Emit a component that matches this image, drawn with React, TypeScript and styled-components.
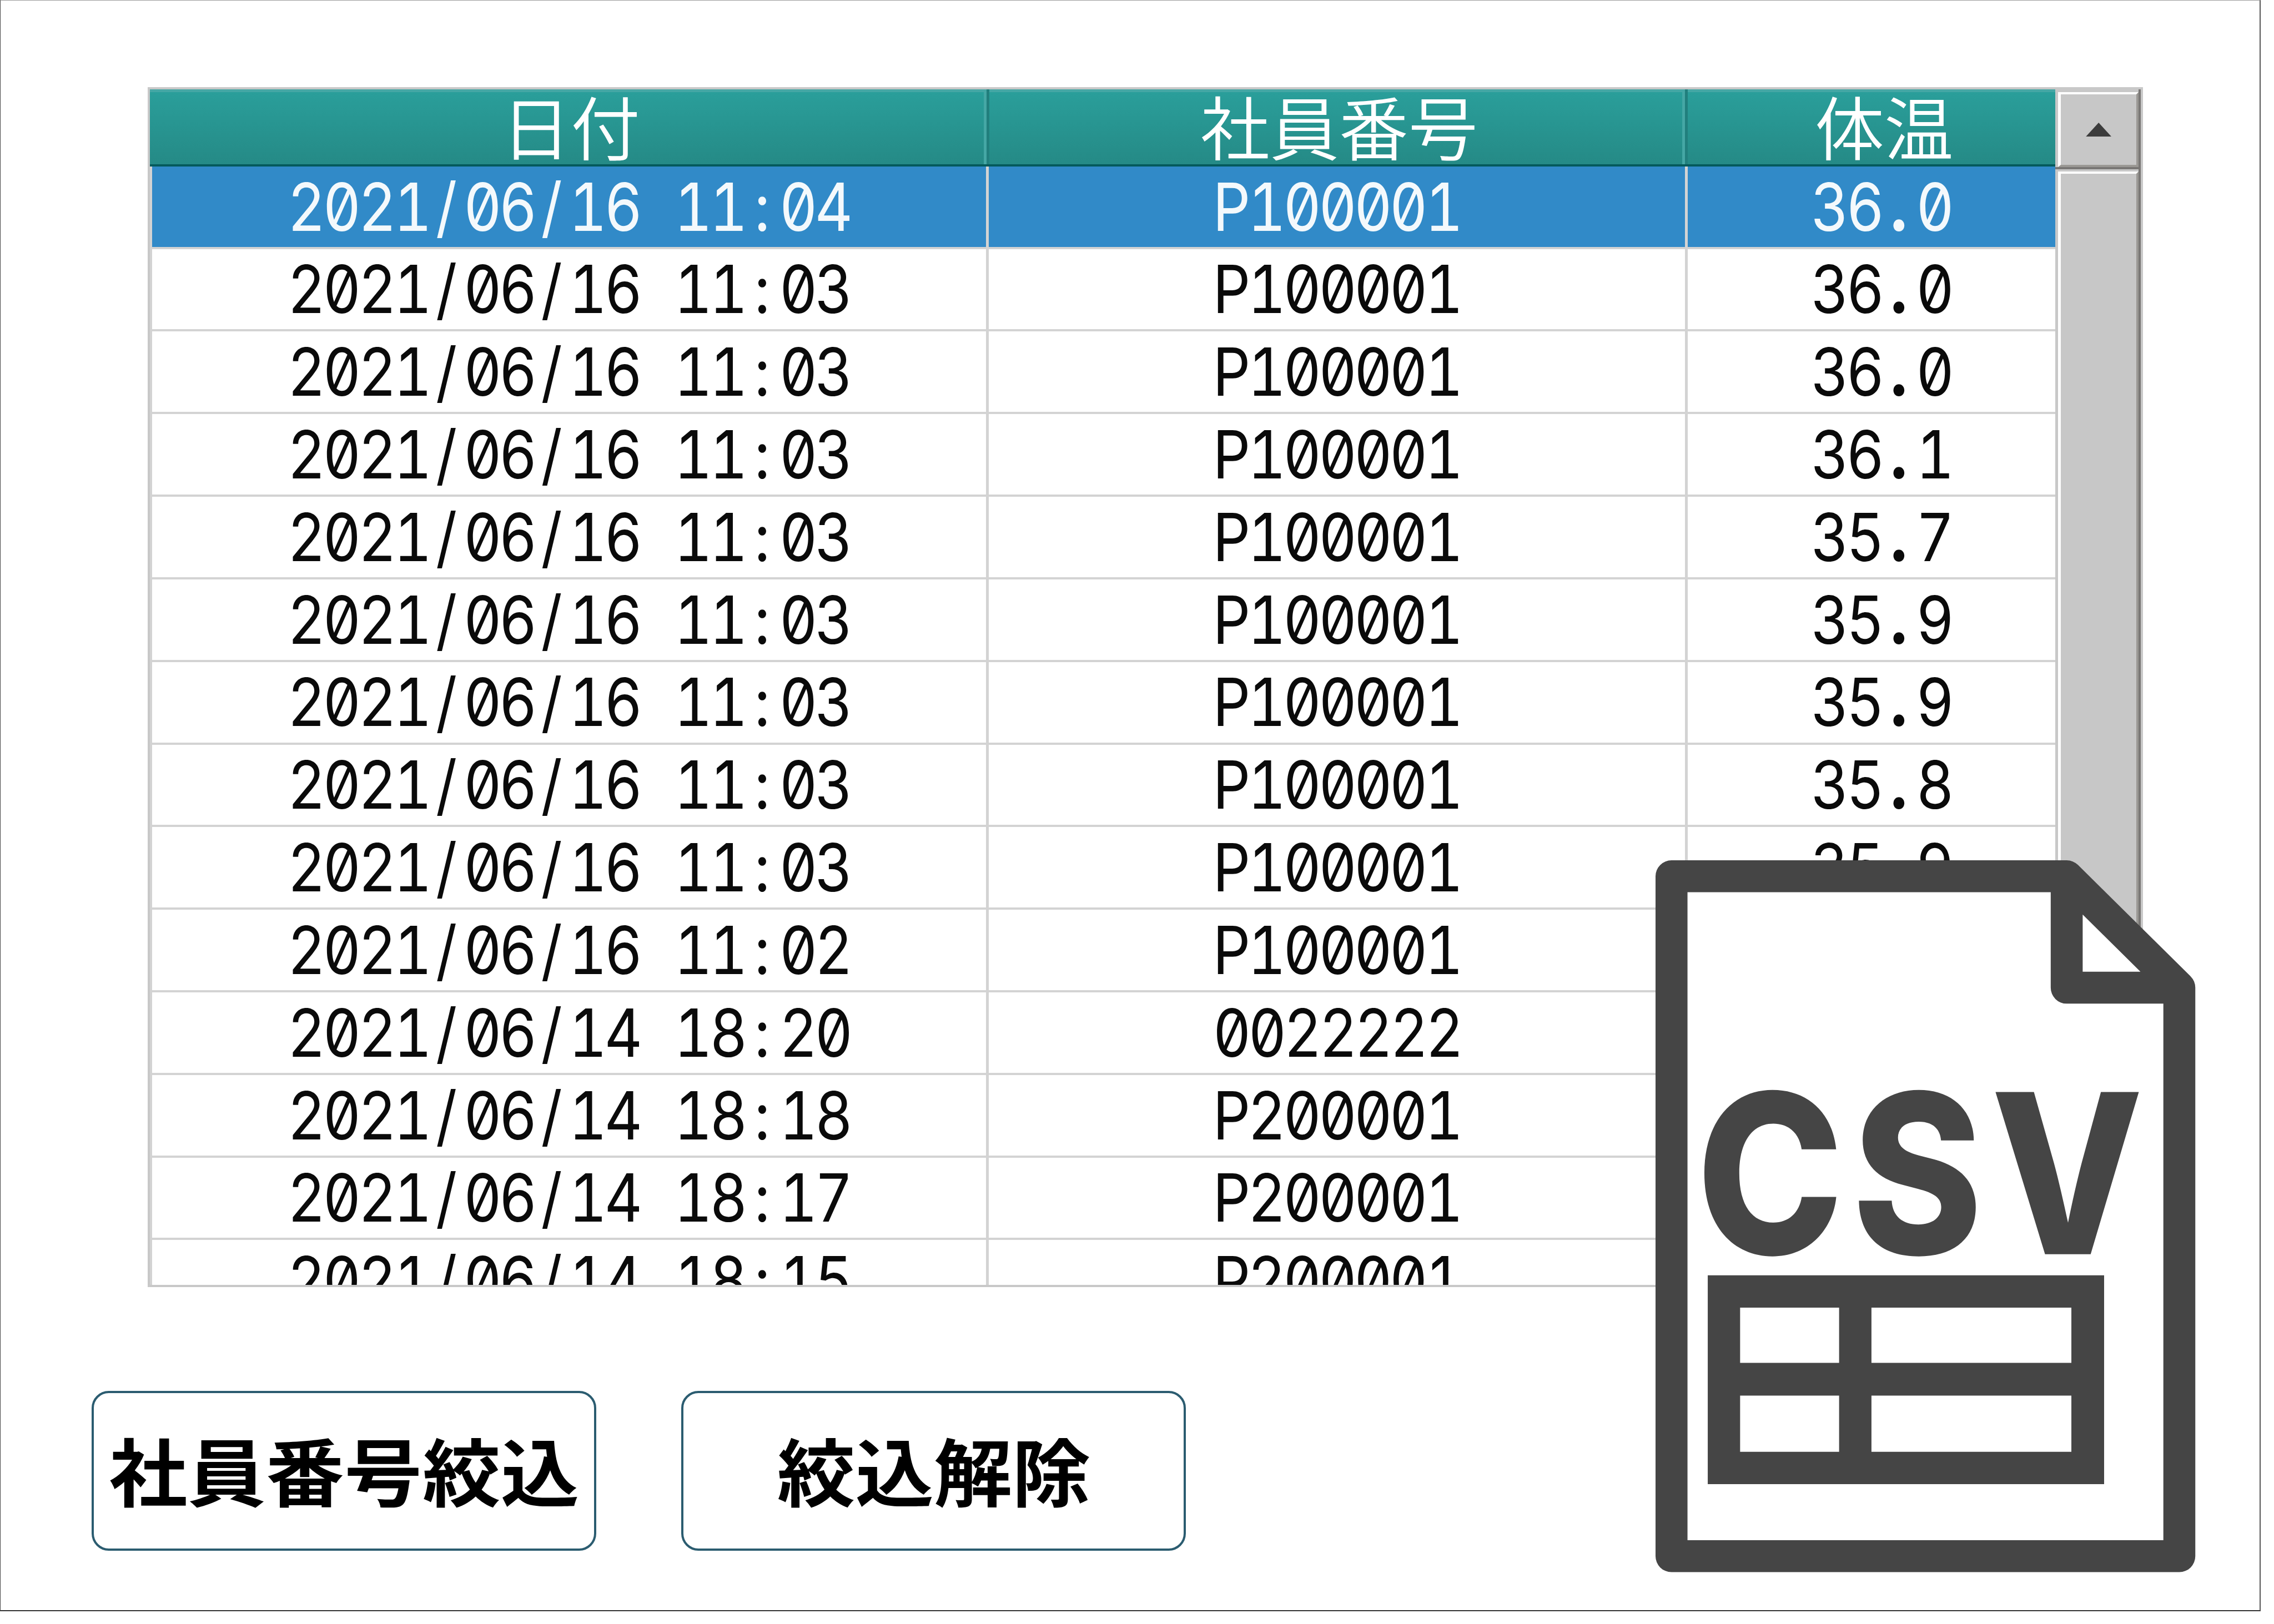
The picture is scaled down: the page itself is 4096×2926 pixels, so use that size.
import React from "react";
import styled, { createGlobalStyle } from "styled-components";

const K = 0.702;
const u = (n: number) => `${n * K}px`;

const Global = createGlobalStyle`
  html, body { margin: 0; padding: 0; background: #fff; }
  body { width: 4096px; height: 2926px; overflow: hidden; }
`;

const Frame = styled.div`
  position: relative;
  box-sizing: border-box;
  width: ${u(5800)};
  height: ${u(4136)};
  background: #fff;
  border-style: solid;
  border-width: 1px 2px 2px 1px;
  border-color: #9a9a9a #555 #333 #444;
  padding-top: ${u(222)};
`;

const Table = styled.div`
  box-sizing: border-box;
  display: flex;
  margin-left: ${u(377)};
  width: ${u(5120)};
  height: ${u(3080)};
  border: ${u(7)} solid #c8c8c8;
  background: #c8c8c8;
  overflow: hidden;
`;

const Main = styled.div`
  display: flex;
  flex-direction: column;
  width: ${u(4890)};
  flex: none;
`;

const Header = styled.div`
  box-sizing: border-box;
  display: grid;
  grid-template-columns: ${u(2154)} ${u(1793)} ${u(943)};
  height: ${u(198)};
  flex: none;
  border-bottom: ${u(7)} solid #045a5c;
  background: linear-gradient(#2a9f9b, #258a86);
  box-shadow: inset 0 ${u(7)} 0 #45a7a5;
`;

const HeadCell = styled.div<{ $last?: boolean; $shift?: number }>`
  box-sizing: border-box;
  display: flex;
  align-items: center;
  justify-content: center;
  padding-left: ${(p) => u(p.$shift ?? 0)};
  padding-bottom: ${u(8)};
  color: #fff;
  font-family: "Noto Sans CJK JP", sans-serif;
  font-weight: 350;
  font-size: ${u(178)};
  line-height: 1;
  white-space: nowrap;
  ${(p) =>
    p.$last
      ? ""
      : `border-right: ${u(8)} solid #217f7d;
         box-shadow: inset -${u(7)} 0 0 #45a7a5;`}
`;

const Body = styled.div`
  flex: 1;
  min-height: 0;
  overflow: hidden;
  background: #fff;
  border-left: ${u(7)} solid #d3d3d3;
`;

const Row = styled.div<{ $selected?: boolean }>`
  box-sizing: border-box;
  display: grid;
  grid-template-columns: ${u(2147)} ${u(1793)} ${u(943)};
  height: ${u(212)};
  border-bottom: ${u(7)} solid #d3d3d3;
  background: ${(p) => (p.$selected ? "#318ac8" : "#fff")};
  color: ${(p) => (p.$selected ? "#f4f9fc" : "#0a0a0a")};
`;

const Cell = styled.div<{ $last?: boolean; $shift?: number }>`
  box-sizing: border-box;
  display: flex;
  align-items: center;
  justify-content: center;
  padding-left: ${(p) => u(p.$shift ?? 0)};
  border-right: ${(p) => (p.$last ? "none" : `${u(8)} solid #d3d3d3`)};
`;

const CellText = styled.span`
  display: inline-block;
  font-family: Inter, "DejaVu Sans Mono", monospace;
  font-weight: 400;
  font-feature-settings: "tnum", "zero";
  font-variant-numeric: tabular-nums slashed-zero;
  font-size: ${u(170)};
  letter-spacing: ${u(-8)};
  line-height: 1;
  white-space: pre;
  transform: scaleX(0.89);
`;

const Sep = styled.span<{ $heavy?: boolean }>`
  display: inline-block;
  width: ${u(99)};
  text-align: center;
  letter-spacing: 0;
  font-weight: ${(p) => (p.$heavy ? 800 : 400)};
`;

const ScrollBar = styled.div`
  display: flex;
  flex-direction: column;
  flex: 1;
  min-width: 0;
  background: #c8c8c8;
  border-right: ${u(7)} solid #797775;
`;

const ScrollCap = styled.div`
  box-sizing: border-box;
  display: flex;
  flex: none;
  height: ${u(205)};
  padding: ${u(7)} 0 0 ${u(7)};
  border-bottom: ${u(7)} solid #797775;
`;

const ScrollFace = styled.div`
  box-sizing: border-box;
  flex: 1;
  display: flex;
  align-items: center;
  justify-content: center;
  background: #c7c7c7;
  border-style: solid;
  border-width: ${u(6)} ${u(7)} ${u(7)} ${u(8)};
  border-color: #fff #9a9894 #9a9894 #fff;
`;

const Arrow = styled.svg`
  width: ${u(66)};
  height: ${u(36)};
  display: block;
`;

const ScrollTrack = styled.div`
  box-sizing: border-box;
  flex: 1;
  display: flex;
  padding: ${u(6)} 0 0 ${u(7)};
`;

const ScrollThumb = styled.div`
  box-sizing: border-box;
  flex: 1;
  background: #c7c7c7;
  border-style: solid;
  border-width: ${u(7)} ${u(7)} 0 ${u(8)};
  border-color: #fff #9a9894 #9a9894 #fff;
`;

const ButtonRow = styled.div`
  display: flex;
  gap: ${u(218)};
  margin: ${u(267)} 0 0 ${u(234)};
`;

const ActionButton = styled.button`
  box-sizing: border-box;
  display: flex;
  align-items: center;
  justify-content: center;
  width: ${u(1295)};
  height: ${u(410)};
  padding: 0 0 ${u(12)};
  background: #fff;
  border: ${u(6)} solid #2b5c70;
  border-radius: ${u(44)};
  color: #000;
  font-family: "Noto Sans CJK JP", sans-serif;
  font-weight: 700;
  font-size: ${u(201)};
  line-height: 1;
  white-space: nowrap;
`;

const ButtonLabel = styled.span`
  display: inline-block;
  transform: scaleY(0.94);
`;

const CsvIcon = styled.svg`
  position: absolute;
  left: ${u(4200 - 1)};
  top: ${u(2150 - 1)};
  width: ${u(1500)};
  height: ${u(1950)};
  display: block;
`;

const Mono = ({ text }: { text: string }) => (
  <CellText>
    {text.split(/([/: .])/).map((part, i) =>
      /^[/: .]$/.test(part) ? (
        <Sep key={i} $heavy={part === "."}>{part}</Sep>
      ) : (
        part
      ),
    )}
  </CellText>
);

const rows: [string, string, string][] = [
  ["2021/06/16 11:04", "P100001", "36.0"],
  ["2021/06/16 11:03", "P100001", "36.0"],
  ["2021/06/16 11:03", "P100001", "36.0"],
  ["2021/06/16 11:03", "P100001", "36.1"],
  ["2021/06/16 11:03", "P100001", "35.7"],
  ["2021/06/16 11:03", "P100001", "35.9"],
  ["2021/06/16 11:03", "P100001", "35.9"],
  ["2021/06/16 11:03", "P100001", "35.8"],
  ["2021/06/16 11:03", "P100001", "35.9"],
  ["2021/06/16 11:02", "P100001", ""],
  ["2021/06/14 18:20", "0022222", ""],
  ["2021/06/14 18:18", "P200001", ""],
  ["2021/06/14 18:17", "P200001", ""],
  ["2021/06/14 18:15", "P200001", ""],
];

export default function App() {
  return (
    <>
      <Global />
      <Frame>
        <Table>
          <Main>
            <Header>
              <HeadCell $shift={14}>日付</HeadCell>
              <HeadCell $shift={10}>社員番号</HeadCell>
              <HeadCell $last $shift={64}>体温</HeadCell>
            </Header>
            <Body>
              {rows.map((r, i) => (
                <Row key={i} $selected={i === 0}>
                  <Cell><Mono text={r[0]} /></Cell>
                  <Cell><Mono text={r[1]} /></Cell>
                  <Cell $last $shift={50}><Mono text={r[2]} /></Cell>
                </Row>
              ))}
            </Body>
          </Main>
          <ScrollBar>
            <ScrollCap>
              <ScrollFace>
                <Arrow viewBox="0 0 66 36">
                  <path d="M33 0 L66 36 H0 Z" fill="#3c3c3c" />
                </Arrow>
              </ScrollFace>
            </ScrollCap>
            <ScrollTrack>
              <ScrollThumb />
            </ScrollTrack>
          </ScrollBar>
        </Table>
        <ButtonRow>
          <ActionButton><ButtonLabel>社員番号絞込</ButtonLabel></ActionButton>
          <ActionButton><ButtonLabel>絞込解除</ButtonLabel></ActionButton>
        </ButtonRow>
        <CsvIcon viewBox="4200 2150 1500 1950">
          <path
            d="M5591 2534 L5302 2248 H4288 V3993 H5591 Z"
            fill="#fff"
          />
          <path
            d="M5591 2534 L5302 2248 V2534 H5591 V3993 H4288 V2248 H5302"
            fill="none"
            stroke="#454545"
            strokeWidth={82}
            strokeLinejoin="round"
          />
          <text
            x={4352}
            y={3218}
            textLength={1168}
            lengthAdjust="spacingAndGlyphs"
            letterSpacing={24}
            fontFamily="Inter, sans-serif"
            fontWeight={800}
            fontSize={572}
            fill="#454545"
          >
            CSV
          </text>
          <path
            fillRule="evenodd"
            fill="#454545"
            d="M4381 3272 H5398 V3808 H4381 Z M4464 3355 V3497 H4718 V3355 Z M4801 3355 V3497 H5314 V3355 Z M4464 3581 V3725 H4718 V3581 Z M4801 3581 V3725 H5314 V3581 Z"
          />
        </CsvIcon>
      </Frame>
    </>
  );
}
